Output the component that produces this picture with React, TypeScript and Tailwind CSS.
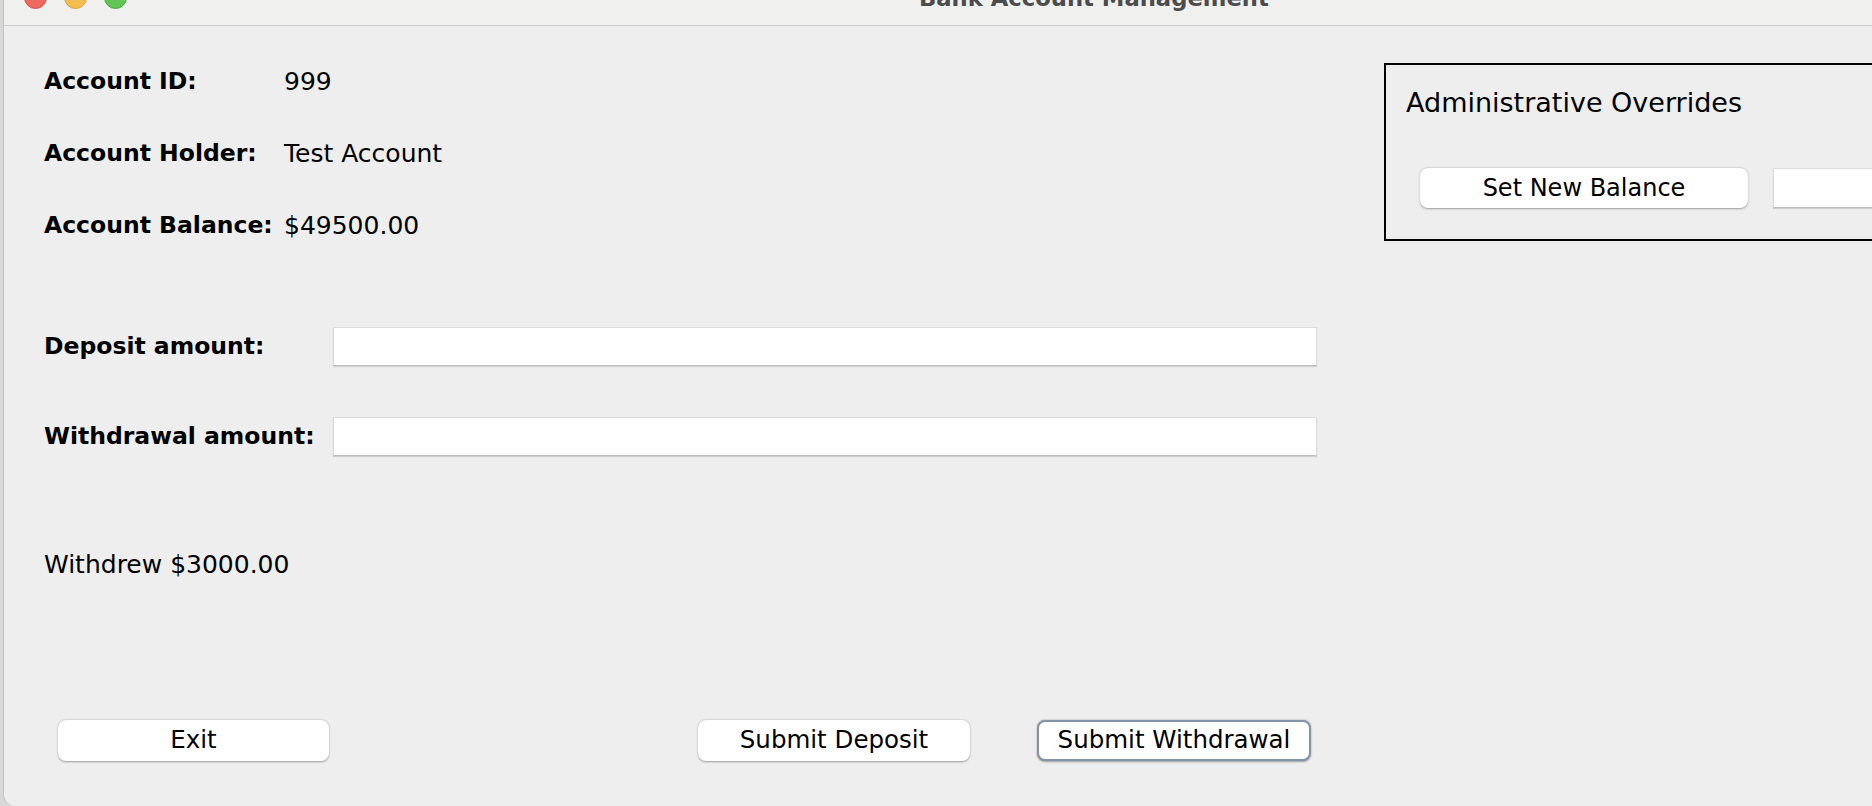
import React from 'react';

const btn =
  'flex items-center justify-center rounded-[8px] bg-white text-[24.5px] text-black shadow-[0_0.5px_2px_rgba(0,0,0,0.35)]';
const field =
  'border border-[#dcdcdc] border-b-[#bcbcbc] bg-white shadow-[0_1px_1px_rgba(0,0,0,0.12)]';

function InfoRow({ label, value }: { label: string; value: string }) {
  return (
    <div className="flex h-[72px] items-center">
      <span className="w-[240px] text-[23.5px] font-bold">{label}</span>
      <span className="text-[25px]">{value}</span>
    </div>
  );
}

function AmountRow({ label, className }: { label: string; className: string }) {
  return (
    <div className={`flex h-[39px] items-center ${className}`}>
      <span className="w-[289px] text-[23.5px] font-bold">{label}</span>
      <div className={`h-[39px] w-[984px] ${field}`} />
    </div>
  );
}

function TitleBar() {
  return (
    <div className="relative h-[26px] shrink-0 overflow-hidden border-b border-[#cdcdcd] bg-[#f0f0ef]">
      {/* window controls, cut off by the top edge */}
      <span className="absolute left-[20px] top-[-14px] h-[23px] w-[23px] rounded-full border border-[#d9544a] bg-[#ee6a5f]" />
      <span className="absolute left-[60px] top-[-14px] h-[23px] w-[23px] rounded-full border border-[#d9a23a] bg-[#f5bd4f]" />
      <span className="absolute left-[100px] top-[-14px] h-[23px] w-[23px] rounded-full border border-[#4ea83f] bg-[#61c454]" />
      <span className="absolute left-[915px] top-[-13px] text-[22.7px] leading-none font-bold text-[#4c4c4c]">
        Bank Account Management
      </span>
    </div>
  );
}

function AdminBox() {
  return (
    <div className="mt-[37px] h-[178px] w-[700px] shrink-0 border-2 border-black pl-[20px]">
      <div className="mt-[23px] flex h-[30px] items-center text-[27px]">Administrative Overrides</div>
      <div className="mt-[50px] flex items-center">
        <button className={`ml-[14px] h-[40px] w-[328px] text-[24px] ${btn}`}>Set New Balance</button>
        <div className={`ml-[25px] h-[40px] w-[300px] ${field}`} />
      </div>
    </div>
  );
}

export default function App() {
  return (
    <div className="flex h-[806px] w-[1872px] overflow-hidden bg-[#d8d8d8] pl-[3px] font-['DejaVu_Sans',sans-serif] text-black">
      <div className="flex min-w-0 flex-1 flex-col overflow-hidden rounded-bl-[12px] border-l border-[#c2c2c2] bg-[#eeeeee]">
        <TitleBar />
        <div className="flex flex-1 overflow-hidden">
          <div className="flex w-[1380px] shrink-0 flex-col pl-[40px] pt-[20px]">
            <InfoRow label="Account ID:" value="999" />
            <InfoRow label="Account Holder:" value="Test Account" />
            <InfoRow label="Account Balance:" value="$49500.00" />

            <AmountRow label="Deposit amount:" className="mt-[65px]" />
            <AmountRow label="Withdrawal amount:" className="mt-[51px]" />

            <div className="mt-[89px] flex h-[40px] items-center text-[25px]">Withdrew $3000.00</div>

            <div className="mt-[135px] flex items-center">
              <button className={`ml-[14px] h-[41px] w-[271px] ${btn}`}>Exit</button>
              <button className={`ml-[369px] h-[41px] w-[272px] ${btn}`}>Submit Deposit</button>
              <button
                className={`ml-[67px] h-[41px] w-[274px] border-2 border-[#8394aa] ${btn}`}
              >
                Submit Withdrawal
              </button>
            </div>
          </div>
          <AdminBox />
        </div>
      </div>
    </div>
  );
}
